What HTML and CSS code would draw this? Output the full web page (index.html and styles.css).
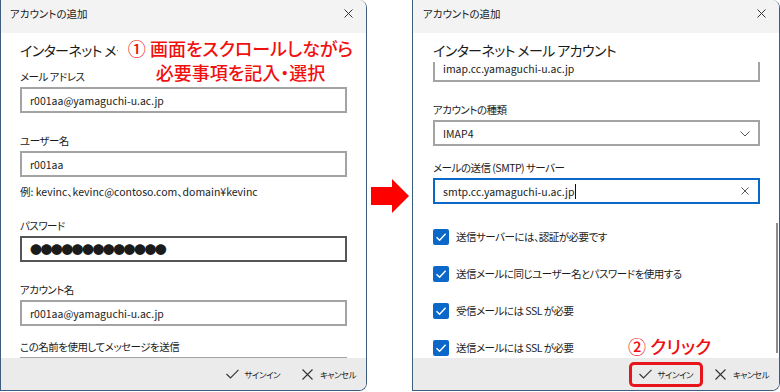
FILE: index.html
```html
<!DOCTYPE html>
<html lang="ja">
  <head>
    <meta charset="utf-8">
    <link rel="stylesheet" href="styles.css">
  </head>
  <body>
    <div class="stage">
      <section class="win win-left">
        <header class="titlebar">
          <span>アカウントの追加</span>
          <svg class="close" viewBox="0 0 9 9"><path d="M0.5 0.5L8.5 8.5M8.5 0.5L0.5 8.5"/></svg>
        </header>
        <div class="body">
          <h1>インターネット メール アカウント</h1>
          <label class="lbl first">メール アドレス</label>
          <div class="field">r001aa@yamaguchi-u.ac.jp</div>
          <label class="lbl">ユーザー名</label>
          <div class="field">r001aa</div>
          <p class="hint">例: kevinc、kevinc@contoso.com、domain¥kevinc</p>
          <label class="lbl pw">パスワード</label>
          <div class="field field-dark"><span class="dots">●●●●●●●●●●●●●</span></div>
          <label class="lbl acct">アカウント名</label>
          <div class="field">r001aa@yamaguchi-u.ac.jp</div>
          <label class="lbl last">この名前を使用してメッセージを送信</label>
          <div class="field">&nbsp;</div>
        </div>
        <footer class="actions">
          <span class="btn"><svg class="ico" viewBox="0 0 13 10"><path d="M0.5 5L4.5 9L12.5 0.8"/></svg>サインイン</span>
          <span class="btn"><svg class="ico ico-x" viewBox="0 0 11 11"><path d="M0.5 0.5L10.5 10.5M10.5 0.5L0.5 10.5"/></svg>キャンセル</span>
        </footer>
        <div class="note note-one">① 画面をスクロールしながら<br>必要事項を記入・選択</div>
      </section>

      <div class="gap">
        <svg class="arrow" viewBox="0 0 38 34"><polygon points="0,8 21,8 21,0 38,17 21,34 21,26 0,26"/></svg>
      </div>

      <section class="win win-right">
        <header class="titlebar">
          <span>アカウントの追加</span>
          <svg class="close" viewBox="0 0 9 9"><path d="M0.5 0.5L8.5 8.5M8.5 0.5L0.5 8.5"/></svg>
        </header>
        <div class="body body-right">
          <h1>インターネット メール アカウント</h1>
          <div class="scroller">
            <div class="field field-top">imap.cc.yamaguchi-u.ac.jp</div>
            <label class="lbl kind">アカウントの種類</label>
            <div class="field select">IMAP4<svg class="chev" viewBox="0 0 10 6"><path d="M0.5 0.5L5 5L9.5 0.5"/></svg></div>
            <label class="lbl smtp">メールの送信 (SMTP) サーバー</label>
            <div class="field field-focus">smtp.cc.yamaguchi-u.ac.jp<span class="caret"></span><svg class="clear" viewBox="0 0 9 9"><path d="M0.5 0.5L8.5 8.5M8.5 0.5L0.5 8.5"/></svg></div>
            <div class="checks">
              <div class="check"><span class="box"><svg viewBox="0 0 16 16"><path d="M3.5 8.2L6.6 11.2L12.6 4.8"/></svg></span>送信サーバーには、認証が必要です</div>
              <div class="check"><span class="box"><svg viewBox="0 0 16 16"><path d="M3.5 8.2L6.6 11.2L12.6 4.8"/></svg></span>送信メールに同じユーザー名とパスワードを使用する</div>
              <div class="check"><span class="box"><svg viewBox="0 0 16 16"><path d="M3.5 8.2L6.6 11.2L12.6 4.8"/></svg></span>受信メールには SSL が必要</div>
              <div class="check"><span class="box"><svg viewBox="0 0 16 16"><path d="M3.5 8.2L6.6 11.2L12.6 4.8"/></svg></span>送信メールには SSL が必要</div>
            </div>
          </div>
        </div>
        <footer class="actions">
          <span class="btn btn-mark"><svg class="ico" viewBox="0 0 13 10"><path d="M0.5 5L4.5 9L12.5 0.8"/></svg>サインイン</span>
          <span class="btn"><svg class="ico ico-x" viewBox="0 0 11 11"><path d="M0.5 0.5L10.5 10.5M10.5 0.5L0.5 10.5"/></svg>キャンセル</span>
        </footer>
        <div class="thumb"></div>
        <div class="note note-two">② クリック</div>
      </section>
    </div>
  </body>
</html>
```

FILE: styles.css
```css
body { margin:0; background:#fff; color:#1b1b1b;
  font-family:"Noto Sans CJK JP","Noto Sans",sans-serif; font-feature-settings:"palt"; }
.stage { display:flex; width:780px; height:392px; }

.win { position:relative; display:flex; flex-direction:column; box-sizing:border-box; height:391px;
  border:1px solid #3d5d7f; border-top:0; border-radius:0 8px 8px 0; overflow:hidden; background:#fff; }
.win-left { width:367px; }
.win-right { width:368px; }

.titlebar { display:flex; justify-content:space-between; align-items:flex-start; height:33px; flex:none;
  box-sizing:border-box; padding:5px 13px 0 9px; background:#f3f3f3; font-size:10.5px; line-height:18px; }
.win-right .titlebar { padding-left:10px; }
.close { width:9px; height:9px; margin-top:4px; fill:none; stroke:#333; stroke-width:1; }

.body { flex:1; overflow:hidden; padding:5px 19px 0 19px; display:flex; flex-direction:column; }
.body-right { padding:5px 19px 0 20px; }
h1 { margin:0; font-size:14px; font-weight:400; letter-spacing:-0.6px; line-height:24px; white-space:nowrap; flex:none; }

.lbl { display:block; font-size:10.5px; letter-spacing:-0.5px; line-height:17px; margin:19px 0 2px; flex:none; }
.lbl.first { margin-top:6px; }
.lbl.pw { margin-top:17px; }
.lbl.last { margin-top:12px; }
.hint { margin:6px 0 0; font-size:10.5px; line-height:17px; flex:none; }

.field { position:relative; display:flex; align-items:center; flex:none; box-sizing:border-box; height:26px;
  border:2px solid #a3a3a3; padding:0 8px; font-size:10.5px; background:#fff; }
.field-dark { border-color:#555; }
.dots { font-size:12px; letter-spacing:-1.6px; }

.scroller { flex:1; overflow:hidden; }
.field-top { margin-top:-6px; border-top:0; }
.lbl.kind { margin-top:19px; }
.select .chev { position:absolute; right:8px; top:9px; width:10px; height:6px; fill:none; stroke:#555; stroke-width:1; }
.lbl.smtp { margin-top:13px; }
.field-focus { border-color:#0b68c9; }
.caret { display:inline-block; width:1px; height:15px; background:#111; margin-left:1px; }
.clear { position:absolute; right:9px; top:7px; width:8px; height:8px; fill:none; stroke:#555; stroke-width:1.1; }

.checks { margin-top:14px; }
.check { display:flex; align-items:center; gap:7px; height:37px; font-size:10.5px; letter-spacing:-0.5px; }
.box { display:flex; width:16px; height:16px; border-radius:2px; background:#0b68c9; }
.box svg { width:16px; height:16px; fill:none; stroke:#fff; stroke-width:1.4; }

.actions { display:flex; justify-content:flex-end; align-items:center; gap:2px; flex:none; height:32px;
  background:#ebebeb; font-size:8.5px; letter-spacing:-0.5px; }
.btn { display:flex; align-items:center; gap:5px; height:25px; padding:0 10px; border-radius:5px; }
.ico { width:13px; height:10px; fill:none; stroke:#333; stroke-width:1.1; }
.ico-x { width:11px; height:11px; margin-right:2px; }
.btn-mark { box-shadow:inset 0 0 0 3px #e8141c; }

.thumb { position:absolute; right:1px; top:223px; width:2px; height:130px; background:#8c8c8c; }

.gap { width:45px; display:flex; align-items:center; justify-content:center; }
.arrow { width:38px; height:34px; fill:#ff0000; }

.note { position:absolute; color:#f01010; font-size:18px; line-height:24px; font-weight:500; }
.note-one { left:117px; top:36px; width:245px; text-align:center; background:#fff; }
.note-two { left:215px; top:334px; }
```
